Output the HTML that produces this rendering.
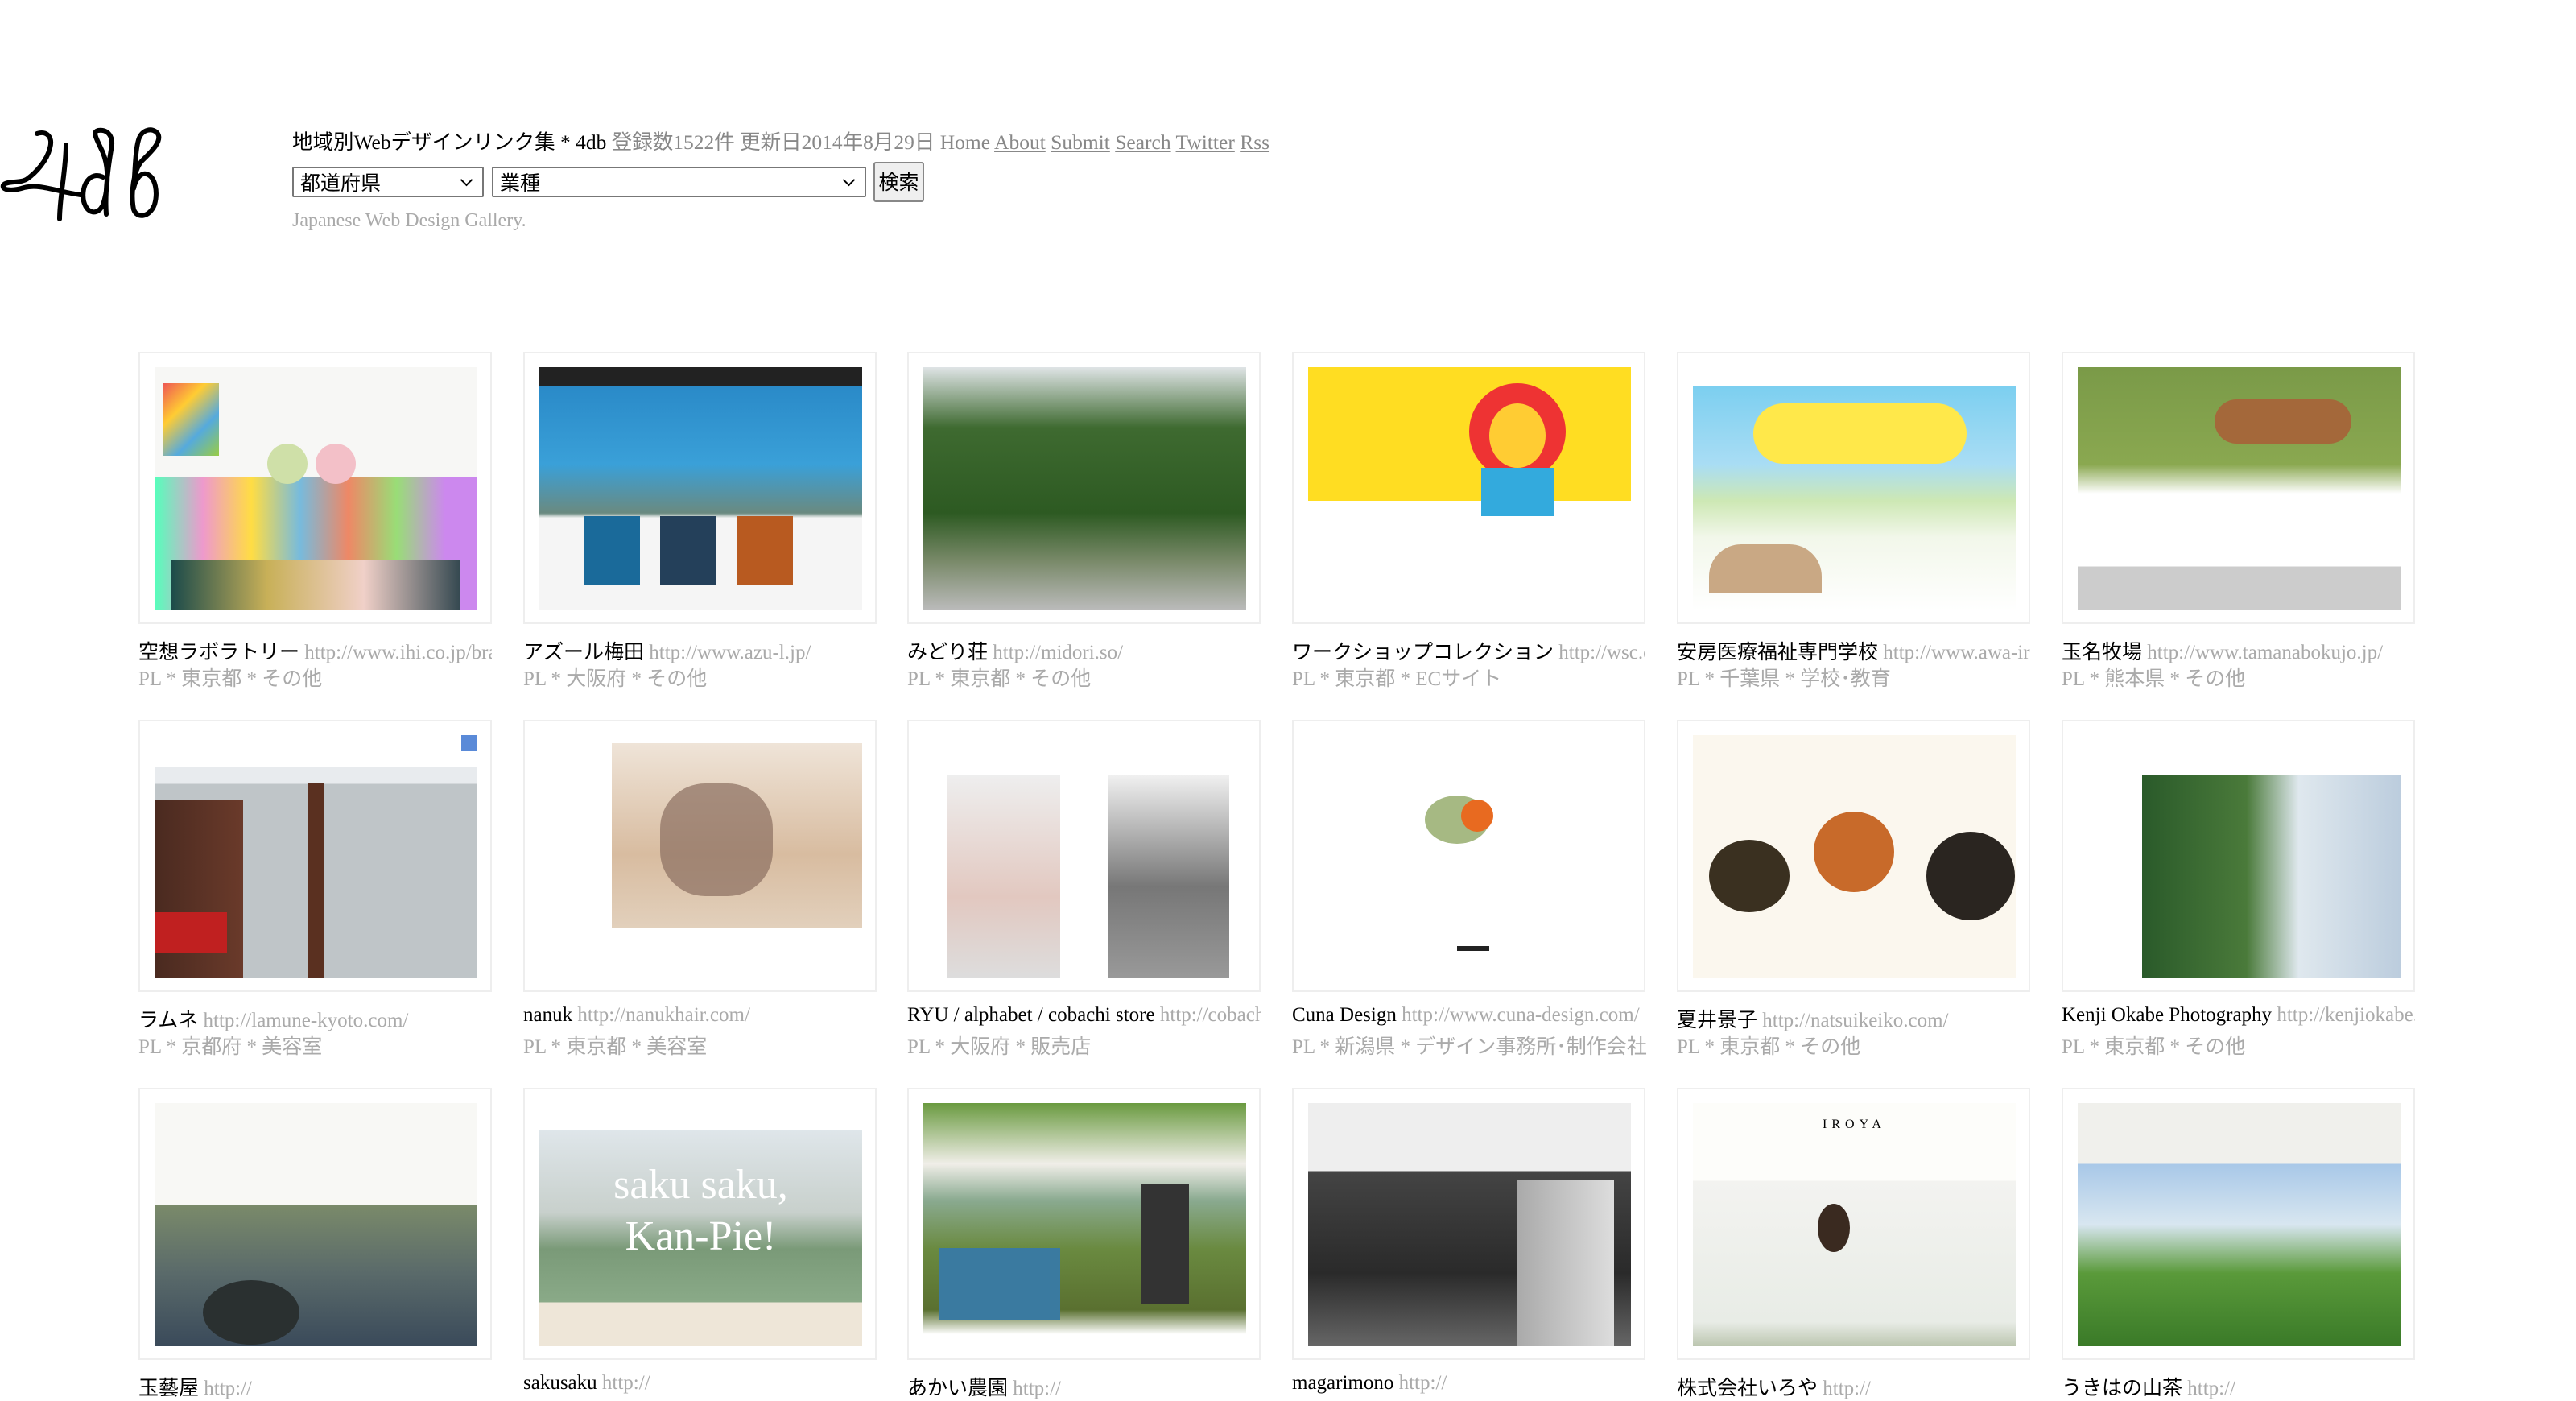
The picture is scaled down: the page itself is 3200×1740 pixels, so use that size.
<!DOCTYPE html>
<html><head><meta charset="utf-8"><style>
*{margin:0;padding:0;box-sizing:border-box}
body{width:3200px;height:1716px;overflow:hidden;background:#fff;font-family:"Liberation Serif","Noto Sans CJK JP",serif;position:relative;color:#000}
.hd{position:absolute;left:363px;top:156px;font-size:25.5px;white-space:nowrap;color:#000}
.hd .g{color:#888}.hd a{color:#888;text-decoration:underline}
.sel{position:absolute;top:207px;height:38px;border:2px solid #777;border-radius:2px;background:#fff;font-size:25px;padding:2px 8px;font-family:"Noto Sans CJK JP",sans-serif;line-height:30px}
.sel:after{content:"";position:absolute;right:14px;top:9px;width:9px;height:9px;border-right:2px solid #000;border-bottom:2px solid #000;transform:rotate(45deg)}
.btn{position:absolute;left:1085px;top:201px;width:63px;height:50px;border:2px solid #888;border-radius:3px;background:#efefef;font-size:25px;text-align:center;line-height:44px;font-family:"Noto Sans CJK JP",sans-serif}
.tag{position:absolute;left:363px;top:261px;font-size:24px;color:#aaa}
.card{position:absolute;width:439px;height:338px;border:2px solid #eee;background:#fff}
.th{position:absolute;left:18px;top:17px;width:401px;height:302px;overflow:hidden}
.t{position:absolute;width:439px;white-space:nowrap;overflow:hidden;font-size:25px;font-family:"Liberation Serif","Noto Sans CJK JP",serif}
.t span{color:#aaa}
.s{position:absolute;font-size:25px;color:#aaa;white-space:nowrap;font-family:"Liberation Serif","Noto Sans CJK JP",serif}
</style></head><body>
<svg style="position:absolute;left:0;top:150px" width="220" height="140" viewBox="0 0 220 140" fill="none" stroke="#000" stroke-width="6" stroke-linecap="round" stroke-linejoin="round">
<path d="M46 16 C58 12 66 20 62 34 C58 50 45 64 34 72 C26 78 8 74 4 80 C2 86 14 88 30 83 C50 78 70 88 100 92"/>
<path d="M82 30 C82 60 74 95 74 122"/>
<path d="M128 70 C112 62 100 80 104 100 C108 116 122 118 128 104 C134 86 136 60 128 40 C120 22 114 14 122 12 C134 10 142 20 138 36 C134 60 130 90 132 116"/>
<path d="M196 16 C202 26 186 40 176 50 C166 62 162 90 166 110 C170 122 186 120 192 104 C196 90 194 70 182 66 C174 64 168 74 166 84 M196 16 C190 8 176 10 172 24 C168 38 168 60 166 84"/>
</svg>
<div class="hd">地域別Webデザインリンク集 * 4db <span class="g">登録数1522件 更新日2014年8月29日 Home</span> <a>About</a> <a>Submit</a> <a>Search</a> <a>Twitter</a> <a>Rss</a></div>
<div class="sel" style="left:363px;width:238px">都道府県</div>
<div class="sel" style="left:611px;width:465px">業種</div>
<div class="btn">検索</div>
<div class="tag">Japanese Web Design Gallery.</div>

<!-- row 1 -->
<div class="card" style="left:172px;top:437px"><div class="th" style="background:linear-gradient(180deg,#f7f7f5 0%,#f7f7f5 45%,transparent 45%),linear-gradient(90deg,#5fb 0%,#e9c 15%,#fd4 30%,#7bd 45%,#e86 60%,#9d7 75%,#c8e 90%);"><div style="position:absolute;left:10px;top:20px;width:70px;height:90px;background:linear-gradient(135deg,#e55,#fc3,#5ad,#9c4)"></div><div style="position:absolute;left:140px;top:95px;width:50px;height:50px;border-radius:50%;background:#cfe0a8"></div><div style="position:absolute;left:200px;top:95px;width:50px;height:50px;border-radius:50%;background:#f3c0c8"></div><div style="position:absolute;left:20px;top:240px;width:360px;height:62px;background:linear-gradient(90deg,#1a4a4a,#c8b058,#f0d0c8,#344850)"></div></div></div>
<div class="card" style="left:650px;top:437px"><div class="th" style="background:linear-gradient(180deg,#222 0 8%,#2a8ac8 8%,#3aa0d8 40%,#6a8a80 60%,#f5f5f5 62%)"><div style="position:absolute;left:55px;top:185px;width:70px;height:85px;background:#1a6a9a"></div><div style="position:absolute;left:150px;top:185px;width:70px;height:85px;background:#24405a"></div><div style="position:absolute;left:245px;top:185px;width:70px;height:85px;background:#b85a20"></div></div></div>
<div class="card" style="left:1127px;top:437px"><div class="th" style="background:linear-gradient(180deg,#dfe4e6 0%,#3e6a30 25%,#2d5a22 60%,#7a8a6a 80%,#bbb 100%)"></div></div>
<div class="card" style="left:1605px;top:437px"><div class="th" style="background:linear-gradient(180deg,#fd2 0 55%,#fff 55%)"><div style="position:absolute;left:200px;top:20px;width:120px;height:120px;border-radius:50%;background:#e33"></div><div style="position:absolute;left:225px;top:45px;width:70px;height:80px;border-radius:50%;background:#fc3"></div><div style="position:absolute;left:215px;top:125px;width:90px;height:60px;background:#3ad"></div></div></div>
<div class="card" style="left:2083px;top:437px"><div class="th" style="background:linear-gradient(180deg,#fff 0 8%,#7ccff0 8%,#a9ddf4 40%,#cde8b4 55%,#f2f7ea 70%,#fff 100%)"><div style="position:absolute;left:75px;top:45px;width:265px;height:75px;border-radius:40px;background:#ffe84a"></div><div style="position:absolute;left:20px;top:220px;width:140px;height:60px;background:#c9a884;border-radius:40px 40px 0 0"></div></div></div>
<div class="card" style="left:2561px;top:437px"><div class="th" style="background:linear-gradient(180deg,#7a9a48 0%,#8aa850 40%,#fff 52%,#fff 82%,#ccc 82%)"><div style="position:absolute;left:170px;top:40px;width:170px;height:55px;border-radius:30px;background:#a4683a"></div></div></div>

<div class="t" style="left:172px;top:790px">空想ラボラトリー <span>http://www.ihi.co.jp/brand/</span></div><div class="s" style="left:172px;top:823px">PL * 東京都 * その他</div>
<div class="t" style="left:650px;top:790px">アズール梅田 <span>http://www.azu-l.jp/</span></div><div class="s" style="left:650px;top:823px">PL * 大阪府 * その他</div>
<div class="t" style="left:1127px;top:790px">みどり荘 <span>http://midori.so/</span></div><div class="s" style="left:1127px;top:823px">PL * 東京都 * その他</div>
<div class="t" style="left:1605px;top:790px">ワークショップコレクション <span>http://wsc.or.jp/</span></div><div class="s" style="left:1605px;top:823px">PL * 東京都 * ECサイト</div>
<div class="t" style="left:2083px;top:790px">安房医療福祉専門学校 <span>http://www.awa-iryo.ac.jp/</span></div><div class="s" style="left:2083px;top:823px">PL * 千葉県 * 学校･教育</div>
<div class="t" style="left:2561px;top:790px">玉名牧場 <span>http://www.tamanabokujo.jp/</span></div><div class="s" style="left:2561px;top:823px">PL * 熊本県 * その他</div>

<!-- row 2 -->
<div class="card" style="left:172px;top:894px"><div class="th" style="background:linear-gradient(180deg,#fff 0 13%,#e8ebee 13% 20%,#bfc5c8 20%)"><div style="position:absolute;left:0;top:80px;width:110px;height:222px;background:linear-gradient(90deg,#4a2a20,#6a3a2a)"></div><div style="position:absolute;left:0;top:220px;width:90px;height:50px;background:#c02020"></div><div style="position:absolute;left:190px;top:60px;width:20px;height:242px;background:#5a3020"></div><div style="position:absolute;right:0;top:0;width:20px;height:20px;background:#5a8ad8"></div></div></div>
<div class="card" style="left:650px;top:894px"><div class="th" style="background:#fff"><div style="position:absolute;left:90px;top:10px;width:314px;height:230px;background:linear-gradient(180deg,#efe4d8,#d8bca0 60%,#e2d0bc)"></div><div style="position:absolute;left:150px;top:60px;width:140px;height:140px;border-radius:40%;background:#8a6e60;opacity:.7"></div></div></div>
<div class="card" style="left:1127px;top:894px"><div class="th" style="background:#fff"><div style="position:absolute;left:30px;top:50px;width:140px;height:252px;background:linear-gradient(180deg,#eee,#e2c8c0 60%,#ddd)"></div><div style="position:absolute;left:230px;top:50px;width:150px;height:252px;background:linear-gradient(180deg,#f0f0f0,#777 55%,#999)"></div></div></div>
<div class="card" style="left:1605px;top:894px"><div class="th" style="background:#fff"><div style="position:absolute;left:145px;top:75px;width:80px;height:60px;border-radius:50%;background:#6a8a30;opacity:.6"></div><div style="position:absolute;left:190px;top:80px;width:40px;height:40px;border-radius:50%;background:#e86a20"></div><div style="position:absolute;left:185px;top:262px;width:40px;height:6px;background:#222"></div></div></div>
<div class="card" style="left:2083px;top:894px"><div class="th" style="background:#fbf7ee"><div style="position:absolute;left:20px;top:130px;width:100px;height:90px;border-radius:50%;background:#3a3020"></div><div style="position:absolute;left:150px;top:95px;width:100px;height:100px;border-radius:50%;background:#c86a2a"></div><div style="position:absolute;left:290px;top:120px;width:110px;height:110px;border-radius:50%;background:#2a2520"></div></div></div>
<div class="card" style="left:2561px;top:894px"><div class="th" style="background:#fff"><div style="position:absolute;left:80px;top:50px;width:324px;height:252px;background:linear-gradient(90deg,#2a5a2a 0%,#4a7a3a 40%,#dfe8ee 60%,#bcd 100%)"></div></div></div>

<div class="t" style="left:172px;top:1247px">ラムネ <span>http://lamune-kyoto.com/</span></div><div class="s" style="left:172px;top:1280px">PL * 京都府 * 美容室</div>
<div class="t" style="left:650px;top:1247px">nanuk <span>http://nanukhair.com/</span></div><div class="s" style="left:650px;top:1280px">PL * 東京都 * 美容室</div>
<div class="t" style="left:1127px;top:1247px">RYU / alphabet / cobachi store <span>http://cobachi.com/</span></div><div class="s" style="left:1127px;top:1280px">PL * 大阪府 * 販売店</div>
<div class="t" style="left:1605px;top:1247px">Cuna Design <span>http://www.cuna-design.com/</span></div><div class="s" style="left:1605px;top:1280px">PL * 新潟県 * デザイン事務所･制作会社</div>
<div class="t" style="left:2083px;top:1247px">夏井景子 <span>http://natsuikeiko.com/</span></div><div class="s" style="left:2083px;top:1280px">PL * 東京都 * その他</div>
<div class="t" style="left:2561px;top:1247px">Kenji Okabe Photography <span>http://kenjiokabe.com/</span></div><div class="s" style="left:2561px;top:1280px">PL * 東京都 * その他</div>

<!-- row 3 -->
<div class="card" style="left:172px;top:1351px"><div class="th" style="background:linear-gradient(180deg,#f8f8f5 0 42%,#7a8a6a 42%,#5a6a6a 70%,#3a4a5a)"><div style="position:absolute;left:60px;top:220px;width:120px;height:80px;border-radius:50%;background:#2a3030"></div></div></div>
<div class="card" style="left:650px;top:1351px"><div class="th" style="background:linear-gradient(180deg,#fff 0 11%,#dfe6ea 11%,#c8d0cc 45%,#7a9a78 60%,#8aaa88 82%,#eee6d8 82%)"><div style="position:absolute;left:0;top:70px;width:401px;text-align:center;color:#fff;font-size:52px;line-height:64px;font-family:'Liberation Serif',serif">saku saku,<br>Kan-Pie!</div></div></div>
<div class="card" style="left:1127px;top:1351px"><div class="th" style="background:linear-gradient(180deg,#6a9a40 0%,#f0eee8 25%,#8aaa90 40%,#6a8a40 60%,#5a7030 85%,#fff 95%)"><div style="position:absolute;left:20px;top:180px;width:150px;height:90px;background:#3a7aa0"></div><div style="position:absolute;left:270px;top:100px;width:60px;height:150px;background:#333"></div></div></div>
<div class="card" style="left:1605px;top:1351px"><div class="th" style="background:linear-gradient(180deg,#eee 0 28%,#444 28%,#2a2a2a 70%,#666)"><div style="position:absolute;left:260px;top:95px;width:120px;height:207px;background:linear-gradient(90deg,#aaa,#ddd)"></div></div></div>
<div class="card" style="left:2083px;top:1351px"><div class="th" style="background:linear-gradient(180deg,#fdfdfa 0 32%,#f3f3f0 32%,#e8ece6 90%,#bcc6b0)"><div style="position:absolute;left:0;top:18px;width:401px;text-align:center;font-size:16px;letter-spacing:6px">IROYA</div><div style="position:absolute;left:155px;top:125px;width:40px;height:60px;border-radius:50%;background:#3a2a20"></div></div></div>
<div class="card" style="left:2561px;top:1351px"><div class="th" style="background:linear-gradient(180deg,#f0f0ec 0 25%,#a8c8e8 25%,#d8e6f0 50%,#5a9a3a 70%,#3a7a28 100%)"></div></div>

<div class="t" style="left:172px;top:1704px">玉藝屋 <span>http://</span></div>
<div class="t" style="left:650px;top:1704px">sakusaku <span>http://</span></div>
<div class="t" style="left:1127px;top:1704px">あかい農園 <span>http://</span></div>
<div class="t" style="left:1605px;top:1704px">magarimono <span>http://</span></div>
<div class="t" style="left:2083px;top:1704px">株式会社いろや <span>http://</span></div>
<div class="t" style="left:2561px;top:1704px">うきはの山茶 <span>http://</span></div>
</body></html>
